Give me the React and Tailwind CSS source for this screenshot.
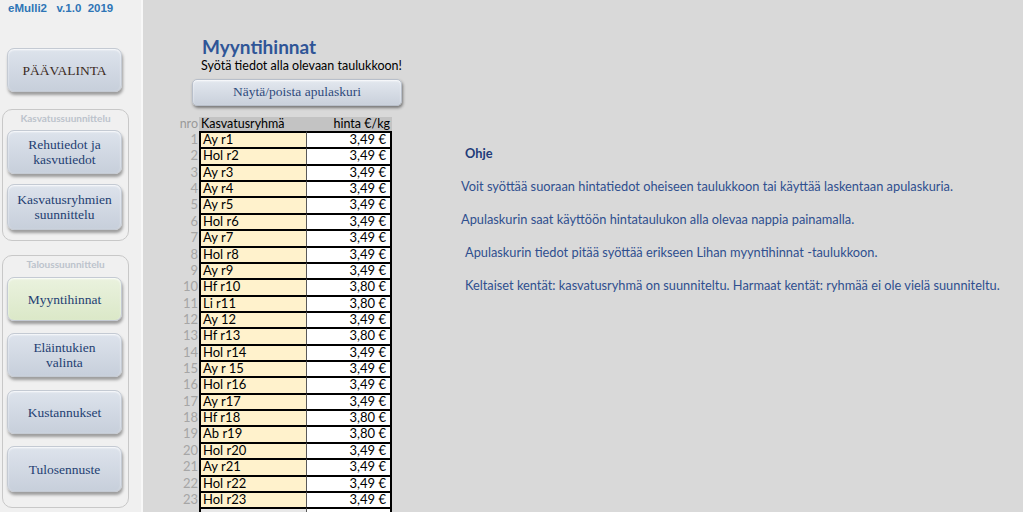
import React from 'react';

const rows = [
  ['Ay r1', '3,49 €'], ['Hol r2', '3,49 €'], ['Ay r3', '3,49 €'], ['Ay r4', '3,49 €'],
  ['Ay r5', '3,49 €'], ['Hol r6', '3,49 €'], ['Ay r7', '3,49 €'], ['Hol r8', '3,49 €'],
  ['Ay r9', '3,49 €'], ['Hf r10', '3,80 €'], ['Li r11', '3,80 €'], ['Ay 12', '3,49 €'],
  ['Hf r13', '3,80 €'], ['Hol r14', '3,49 €'], ['Ay r 15', '3,49 €'], ['Hol r16', '3,49 €'],
  ['Ay r17', '3,49 €'], ['Hf r18', '3,80 €'], ['Ab r19', '3,80 €'], ['Hol r20', '3,49 €'],
  ['Ay r21', '3,49 €'], ['Hol r22', '3,49 €'], ['Hol r23', '3,49 €'],
];

const serif = { fontFamily: '"Liberation Serif", "DejaVu Serif", serif' };

const NavButton = ({ children, green, className = '' }) => (
  <div
    className={`w-[115px] shrink-0 flex items-center justify-center text-center rounded-[7px] border border-[#c4cad3] shadow-[1px_3px_3px_rgba(0,0,0,0.35),inset_0_1px_2px_rgba(255,255,255,0.9)] text-[13.5px] leading-[15px] text-[#243f72] ${green ? 'bg-gradient-to-b from-[#eaf2de] to-[#dbe8c8]' : 'bg-gradient-to-b from-[#dde3ec] to-[#c7cfdb]'} ${className}`}
    style={serif}
  >
    {children}
  </div>
);

const Group = ({ title, children, className = '' }) => (
  <div className={`mx-[2px] w-[127px] shrink-0 rounded-[10px] border border-[#c8c8c8] ${className}`}>
    <div className="h-[14px] pt-[2px] text-center text-[10px] font-bold text-[#bcc3cc] leading-[12px]">{title}</div>
    {children}
  </div>
);

export default function App() {
  return (
    <div className="w-[1023px] h-[512px] overflow-hidden flex bg-[#d9d9d9]" style={{ fontFamily: 'Lato, "Open Sans", sans-serif' }}>
      {/* sivupalkki */}
      <div className="w-[143px] shrink-0 bg-[#f0f0f0] border-r-2 border-[#f8f8f8] flex flex-col">
        <div className="h-[16px] shrink-0 pl-[8px] pt-[1px] text-[11.5px] leading-[14px] font-bold text-[#2e75b6]" style={{ fontFamily: '"Liberation Sans", Arial, sans-serif' }}>
          eMulli2&nbsp;&nbsp; v.1.0&nbsp; 2019
        </div>
        <NavButton className="ml-[7px] mt-[32px] h-[44px] !text-[#3b2a23]">PÄÄVALINTA</NavButton>

        <Group title="Kasvatussuunnittelu" className="mt-[17px] h-[132px]">
          <NavButton className="ml-[4px] mt-[6px] h-[44px]">Rehutiedot ja<br />kasvutiedot</NavButton>
          <NavButton className="ml-[4px] mt-[10px] h-[46px]">Kasvatusryhmien<br />suunnittelu</NavButton>
        </Group>

        <Group title="Taloussuunnittelu" className="mt-[14px] h-[253px]">
          <NavButton green className="ml-[4px] mt-[7px] h-[44px]">Myyntihinnat</NavButton>
          <NavButton className="ml-[4px] mt-[12px] h-[44px]">Eläintukien<br />valinta</NavButton>
          <NavButton className="ml-[4px] mt-[13px] h-[44px]">Kustannukset</NavButton>
          <NavButton className="ml-[4px] mt-[12px] h-[46px]">Tulosennuste</NavButton>
        </Group>
      </div>

      {/* hintataulukko */}
      <div className="ml-[33px] w-[226px] shrink-0 flex flex-col">
        <div className="shrink-0 pl-[26px] pt-[35px] h-[58px] text-[19px] leading-[24px] font-bold text-[#2f5597]">Myyntihinnat</div>
        <div className="shrink-0 pl-[25px] pt-[1px] h-[14px] whitespace-nowrap text-[12.5px] leading-[14px] text-black">Syötä tiedot alla olevaan taulukkoon!</div>
        <div
          className="shrink-0 ml-[16px] mt-[7px] w-[210px] h-[27px] flex items-center justify-center rounded-[5px] border border-[#b8bfca] bg-gradient-to-b from-[#e3e8ef] to-[#c9d0db] shadow-[1px_2px_3px_rgba(0,0,0,0.45),inset_0_1px_2px_rgba(255,255,255,0.9)] text-[13.5px] text-[#2f4a7c]"
          style={serif}
        >
          Näytä/poista apulaskuri
        </div>

        <div className="shrink-0 mt-[11px] flex text-[12.5px] leading-[14px] h-[14px]">
          <div className="w-[23px] text-right pr-[1px] text-[#9a9a9a]">nro</div>
          <div className="w-[193px] flex justify-between bg-[#c3c3c3] px-[2px]">
            <span>Kasvatusryhmä</span>
            <span>hinta €/kg</span>
          </div>
        </div>

        {rows.map(([name, price], i) => (
          <div key={i} className="flex h-[16.36px] shrink-0 text-[13px] leading-[12px]">
            <div className="w-[23px] text-right pr-[1px] text-[#a6a6a6] pt-[2px]">{i + 1}</div>
            <div className="w-[108px] bg-[#fff2cc] border-t-2 border-l-2 border-black border-r border-r-[#595959] pl-[2px]">{name}</div>
            <div className="w-[85px] bg-white border-t-2 border-r-2 border-black text-right pr-[4px]">{price}</div>
          </div>
        ))}
        <div className="flex h-[16px] shrink-0">
          <div className="w-[23px]" />
          <div className="w-[108px] bg-[#e8e8e8] border-t-2 border-l-2 border-black border-r border-r-[#595959]" />
          <div className="w-[85px] bg-white border-t-2 border-r-2 border-black" />
        </div>
      </div>

      {/* ohjeet */}
      <div className="ml-[59px] pt-[145px] flex flex-col gap-[17px] text-[12.8px] leading-[16px] text-[#2f4f8f]">
        <div className="pl-[4px] font-bold text-[#1f3d7a]">Ohje</div>
        <div className="whitespace-nowrap">Voit syöttää suoraan hintatiedot oheiseen taulukkoon tai käyttää laskentaan apulaskuria.</div>
        <div className="whitespace-nowrap">Apulaskurin saat käyttöön hintataulukon alla olevaa nappia painamalla.</div>
        <div className="pl-[4px] whitespace-nowrap">Apulaskurin tiedot pitää syöttää erikseen Lihan myyntihinnat -taulukkoon.</div>
        <div className="pl-[4px] whitespace-nowrap">Keltaiset kentät: kasvatusryhmä on suunniteltu. Harmaat kentät: ryhmää ei ole vielä suunniteltu.</div>
      </div>
    </div>
  );
}
